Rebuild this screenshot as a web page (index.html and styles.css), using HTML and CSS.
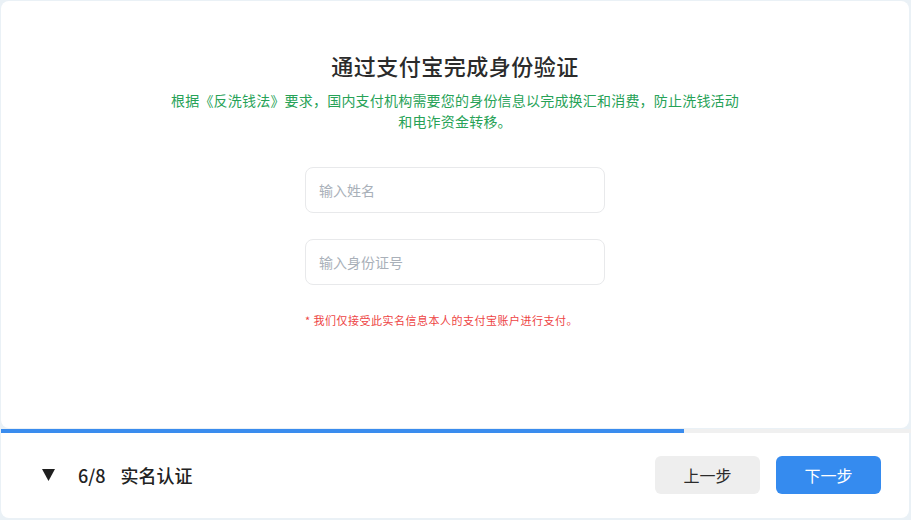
FILE: index.html
```html
<!DOCTYPE html>
<html lang="zh-CN">
<head>
  <meta charset="UTF-8">
  <meta name="viewport" content="width=device-width, initial-scale=1.0">
  <title>实名认证</title>
  <link rel="stylesheet" href="styles.css">
</head>
<body>
  <div class="page">
    <div class="card">
      <h1 class="card-title">通过支付宝完成身份验证</h1>
      <p class="card-description">根据《反洗钱法》要求，国内支付机构需要您的身份信息以完成换汇和消费，防止洗钱活动和电诈资金转移。</p>

      <form id="verifyForm" class="form">
        <input id="realName" type="text" placeholder="输入姓名">
        <input id="idNumber" type="text" placeholder="输入身份证号">
        <p class="note">* 我们仅接受此实名信息本人的支付宝账户进行支付。</p>
      </form>
    </div>

    <div class="progress">
      <div class="progress-bar" style="width: 75%;"></div>
    </div>

    <div class="footer">
      <div class="step">
        <svg class="step-toggle" width="13" height="12" viewBox="0 0 13 12">
          <polygon points="0,0 13,0 6.5,12" fill="#1f1f1f"/>
        </svg>
        <span class="step-count">6/8</span>
        <span class="step-name">实名认证</span>
      </div>
      <div class="actions">
        <button type="button" class="btn btn-secondary">上一步</button>
        <button type="button" class="btn btn-primary">下一步</button>
      </div>
    </div>
  </div>
</body>
</html>
```

FILE: styles.css
```css
body {
  font-family: "Noto Sans CJK SC", "Noto Sans", sans-serif;
  margin: 0;
  padding: 0;
  background-color: #eaf1f6;
  color: #333;
  text-spacing-trim: space-all;
}
.page {
  padding: 1px 2px 2px 1px;
  height: 520px;
  box-sizing: border-box;
  display: flex;
  flex-direction: column;
}
.card {
  background-color: white;
  border-radius: 8px;
  height: 427px;
  box-sizing: border-box;
  padding-top: 49px;
  display: flex;
  flex-direction: column;
  align-items: center;
}
.card-title {
  font-size: 22px;
  font-weight: 500;
  line-height: 30px;
  margin: 0;
  color: #2b2b2b;
  letter-spacing: 0.5px;
}
.card-description {
  width: 580px;
  margin: 10px 0 0 0;
  font-size: 14px;
  line-height: 21px;
  letter-spacing: 0.2px;
  color: #27a257;
  text-align: center;
}
.form {
  width: 300px;
  margin-top: 35px;
  display: flex;
  flex-direction: column;
  gap: 26px;
}
input {
  width: 100%;
  height: 46px;
  box-sizing: border-box;
  padding: 0 13px;
  border: 1px solid #e8e9eb;
  border-radius: 8px;
  font-family: inherit;
  font-size: 14px;
  color: #333;
  outline: none;
}
input::placeholder {
  color: #a9b0b9;
}
.note {
  margin: 1px 0 0 0;
  font-size: 11px;
  line-height: 16px;
  letter-spacing: 0.5px;
  color: #ee4444;
}
.progress {
  margin-top: 1px;
  height: 4px;
  background-color: #f0f0f0;
  margin-right: -2px;
}
.progress-bar {
  height: 100%;
  background-color: #3a8cee;
}
.footer {
  flex: 1;
  background-color: white;
  border-radius: 0 0 8px 8px;
  display: flex;
  align-items: center;
  justify-content: space-between;
  padding: 0 28px 2px 41px;
}
.step {
  display: flex;
  align-items: center;
  font-size: 18px;
  font-weight: 500;
  color: #222;
}
.step-toggle {
  margin-right: 23px;
}
.step-count {
  margin-right: 15px;
}
.actions {
  display: flex;
  gap: 16px;
}
.btn {
  width: 105px;
  height: 38px;
  border: none;
  border-radius: 6px;
  font-family: inherit;
  font-size: 16px;
  cursor: pointer;
}
.btn-secondary {
  background-color: #eeeeee;
  color: #2b2b2b;
}
.btn-primary {
  background-color: #358bef;
  color: white;
}
```
